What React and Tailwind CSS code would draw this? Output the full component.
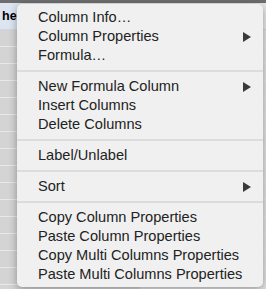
import React from "react";

const groups = [
  [
    { label: "Column Info…" },
    { label: "Column Properties", sub: true },
    { label: "Formula…" },
  ],
  [
    { label: "New Formula Column", sub: true },
    { label: "Insert Columns" },
    { label: "Delete Columns" },
  ],
  [{ label: "Label/Unlabel" }],
  [{ label: "Sort", sub: true }],
  [
    { label: "Copy Column Properties" },
    { label: "Paste Column Properties" },
    { label: "Copy Multi Columns Properties" },
    { label: "Paste Multi Columns Properties" },
  ],
];

function Arrow() {
  return (
    <svg width="8" height="10" viewBox="0 0 8 10" className="shrink-0">
      <polygon points="0,0 8,5 0,10" fill="#3a3a3a" />
    </svg>
  );
}

export default function App() {
  const rows = Array.from({ length: 16 });

  return (
    <div
      className="relative w-[266px] h-[289px] overflow-hidden bg-[#e6e6e6]"
      style={{ fontFamily: '"Liberation Sans", Arial, sans-serif' }}
    >
      {/* Spreadsheet behind the menu */}
      <div className="flex flex-col">
        <div className="h-[3px] bg-[#6e6e6e]" />
        <div className="flex h-[27px] border-b border-[#cfd6df]">
          <div className="w-[17px] bg-[#dce5f1] flex items-center pl-[2px] text-[12.5px] font-bold text-black leading-none">
            he
          </div>
          <div className="w-[43px] bg-[#dce5f1]" />
          <div className="flex-1 bg-[#e8e8e8]" />
        </div>
        {rows.map((_, i) => (
          <div key={i} className="flex h-[17px] border-b border-[#e9e9e9]">
            <div className="w-[140px] bg-[#d4d4d4]" />
            <div className="flex-1 bg-[#e2e2e2]" />
          </div>
        ))}
      </div>

      {/* Context menu */}
      <div className="absolute left-[17px] top-[4px] w-[246px] rounded-[5px] bg-[#f0f0f0] pt-[4px] pb-[3px] shadow-[0_2px_8px_rgba(0,0,0,0.35)] text-[14.6px] text-[#222]">
        {groups.map((group, gi) => (
          <div key={gi}>
            {gi > 0 && (
              <div className="h-[12px] flex items-center">
                <div className="h-[2px] w-full bg-[#dcdcdc]" />
              </div>
            )}
            {group.map((item) => (
              <div
                key={item.label}
                className="flex items-center justify-between h-[19px] leading-[19px] pl-[21px] pr-[12px]"
              >
                <span className="whitespace-nowrap">{item.label}</span>
                {item.sub && <Arrow />}
              </div>
            ))}
          </div>
        ))}
      </div>
    </div>
  );
}
